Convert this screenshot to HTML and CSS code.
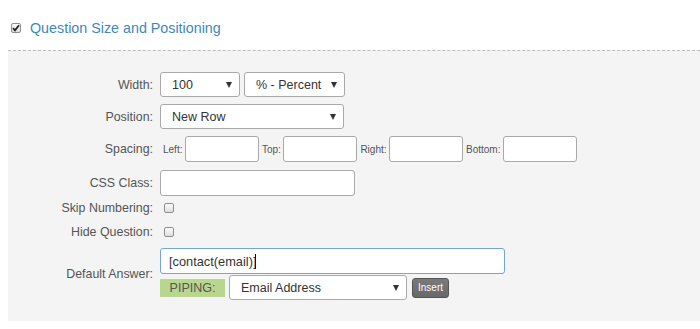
FILE: index.html
```html
<!DOCTYPE html>
<html>
<head>
<meta charset="utf-8">
<link rel="stylesheet" href="styles.css">
</head>
<body>
<div class="page">
  <div class="header">
    <span class="cb"><svg width="8" height="8" viewBox="0 0 8 8"><path d="M1 4.2 L3 6.3 L7 1.2" fill="none" stroke="#222" stroke-width="1.8"/></svg></span>
    <span class="title">Question Size and Positioning</span>
  </div>
  <div class="panel">
    <div class="row r1">
      <div class="lbl">Width:</div>
      <div class="ctrl">
        <span class="sel w80"><select><option>100</option></select></span>
        <span class="sel w101"><select><option>% - Percent</option></select></span>
      </div>
    </div>
    <div class="row r2">
      <div class="lbl">Position:</div>
      <div class="ctrl">
        <span class="sel w184"><select><option>New Row</option></select></span>
      </div>
    </div>
    <div class="row r3">
      <div class="lbl">Spacing:</div>
      <div class="ctrl spacing">
        <span class="sm">Left:</span><input class="inp sp" type="text">
        <span class="sm">Top:</span><input class="inp sp" type="text">
        <span class="sm">Right:</span><input class="inp sp" type="text">
        <span class="sm">Bottom:</span><input class="inp sp" type="text">
      </div>
    </div>
    <div class="row r4">
      <div class="lbl">CSS Class:</div>
      <div class="ctrl"><input class="inp css" type="text"></div>
    </div>
    <div class="row r5">
      <div class="lbl">Skip Numbering:</div>
      <div class="ctrl"><span class="cb small"></span></div>
    </div>
    <div class="row r6">
      <div class="lbl">Hide Question:</div>
      <div class="ctrl"><span class="cb small"></span></div>
    </div>
    <div class="row r7">
      <div class="lbl">Default Answer:</div>
      <div class="ctrl col">
        <div class="inp answer">[contact(email)]<span class="caret"></span></div>
        <div class="piping">
          <span class="pip">PIPING:</span>
          <span class="sel w178"><select><option>Email Address</option></select></span>
          <button class="insert">Insert</button>
        </div>
      </div>
    </div>
  </div>
</div>
</body>
</html>
```

FILE: styles.css
```css
html, body {
  margin: 0;
  padding: 0;
  background: #fff;
}
body {
  font-family: "Liberation Sans", Arial, sans-serif;
  color: #555;
}
.page {
  padding-left: 8px;
}
.header {
  height: 44px;
  padding-top: 6px;
  display: flex;
  align-items: center;
}
.cb {
  display: inline-flex;
  align-items: center;
  justify-content: center;
  box-sizing: border-box;
  width: 10px;
  height: 10px;
  border: 1px solid #8e8e8e;
  border-radius: 2px;
  background: linear-gradient(#fbfbfb, #dedede);
}
.header .cb {
  margin-left: 3px;
  margin-right: 9px;
}
.title {
  font-size: 14.3px;
  color: #3f87c0;
  line-height: 16px;
}
.panel {
  border-top: 1px dashed #bdbdbd;
  background: #f4f4f4;
  padding: 21px 0 21px 0;
}
.row {
  display: flex;
  align-items: center;
}
.lbl {
  width: 145px;
  margin-right: 7px;
  text-align: right;
  font-size: 12.4px;
  color: #555;
  flex: none;
}
.ctrl {
  display: flex;
  align-items: center;
}
.ctrl.col {
  flex-direction: column;
  align-items: flex-start;
}
.r1 { height: 25px; margin-bottom: 7px; }
.r2 { height: 25px; margin-bottom: 7px; }
.r3 { height: 26px; margin-bottom: 8px; }
.r4 { height: 26px; margin-bottom: 4px; }
.r5 { height: 16px; margin-bottom: 8px; }
.r6 { height: 16px; margin-bottom: 8px; }
.r7 { height: 52px; }

.sel {
  position: relative;
  display: inline-block;
  height: 25px;
}
.sel select {
  appearance: none;
  -webkit-appearance: none;
  box-sizing: border-box;
  width: 100%;
  height: 25px;
  border: 1px solid #a9a9a9;
  border-radius: 3px;
  background: #fff;
  padding: 0 0 0 11px;
  font-family: "Liberation Sans", Arial, sans-serif;
  font-size: 12.5px;
  color: #333;
  outline: none;
}
.sel::after {
  content: "";
  position: absolute;
  right: 8px;
  top: 10px;
  border-left: 3.5px solid transparent;
  border-right: 3.5px solid transparent;
  border-top: 6px solid #333;
  pointer-events: none;
}
.w80 { width: 80px; margin-right: 4px; }
.w101 { width: 101px; }
.w184 { width: 184px; }
.w178 { width: 178px; }

.inp {
  box-sizing: border-box;
  border: 1px solid #a9a9a9;
  border-radius: 3px;
  background: #fff;
  height: 26px;
  margin: 0;
  font-family: "Liberation Sans", Arial, sans-serif;
  font-size: 12.5px;
  color: #333;
  outline: none;
}
.spacing {
  padding-left: 3px;
}
.sm {
  font-size: 10px;
  color: #555;
  margin-right: 2.5px;
}
.inp.sp {
  width: 74px;
  height: 26px;
  margin-right: 3px;
}
.inp.css {
  width: 195px;
}
.ctrl .cb.small {
  margin-left: 4px;
}
.inp.answer {
  width: 345px;
  height: 26px;
  border-color: #6fa6e0;
  padding-left: 8px;
  display: flex;
  align-items: center;
  font-size: 12.8px;
}
.caret {
  display: inline-block;
  width: 1px;
  height: 15px;
  background: #111;
  margin-left: -1px;
}
.piping {
  display: flex;
  align-items: center;
  margin-top: 1px;
}
.pip {
  display: inline-block;
  width: 65px;
  height: 18px;
  line-height: 18px;
  background: #b8d68d;
  color: #555;
  font-size: 12.5px;
  text-align: center;
  margin-right: 4px;
}
.insert {
  margin-left: 5px;
  height: 20px;
  width: 37px;
  padding: 0;
  border: 1px solid #555;
  border-radius: 3px;
  background: linear-gradient(#7a7a7a, #686868);
  color: #fff;
  font-family: "Liberation Sans", Arial, sans-serif;
  font-size: 10px;
}
```
